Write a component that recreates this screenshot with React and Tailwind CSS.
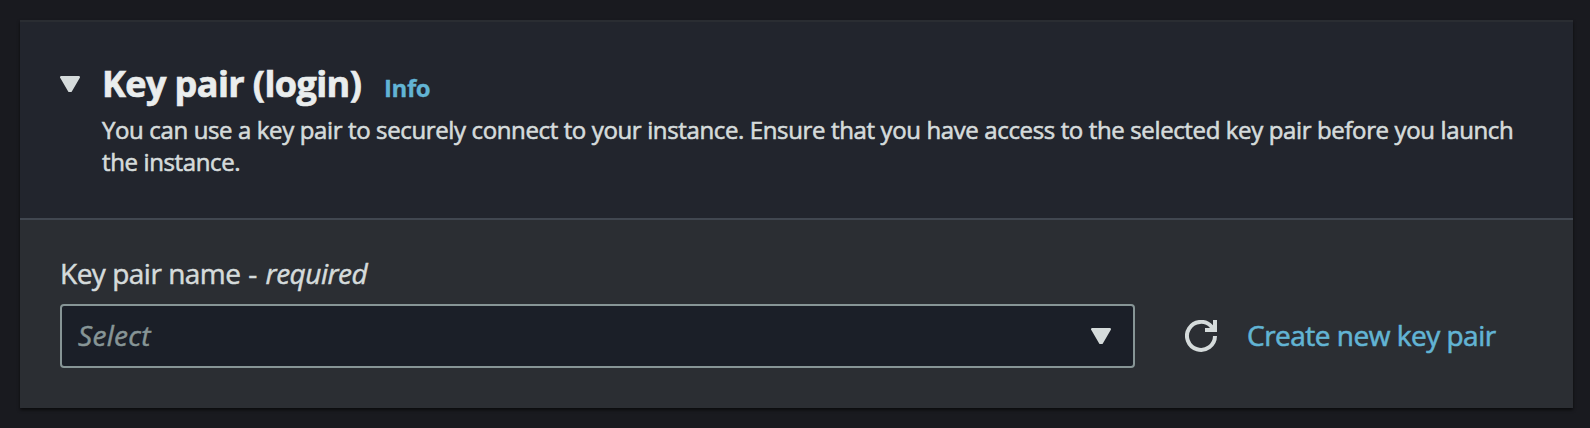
export default function App() {
  return (
    <div className="h-[428px] w-[1590px] bg-[#191a1f] pt-5 pl-5 font-['Open_Sans',sans-serif]">
      <section className="h-[388px] w-[1553px] border-t-2 border-[#2a2d32] bg-[#2b2e33] shadow-[0_2px_3px_rgba(0,0,0,0.6)]">
        <header className="flex h-[198px] border-b-2 border-[#414750] bg-[#22252d] pt-[36px] pl-10">
          <svg className="mt-[18px] h-4 w-5 shrink-0" viewBox="0 0 20 16"><path d="M1.2 1.2h17.6L10.8 14.8H9.2z" fill="#d5dbdb" stroke="#d5dbdb" strokeWidth="2.4" strokeLinejoin="round" /></svg>
          <div className="ml-[22px]">
            <div className="flex h-14 items-baseline">
              <h2 className="w-[282px] text-[36px] leading-[51px] font-bold tracking-[-0.6px] whitespace-nowrap text-[#eaeded] [-webkit-text-stroke:0.7px]">Key pair (login)</h2>
              <a className="text-[24px] font-bold tracking-[-0.4px] text-[#62b4d4] [-webkit-text-stroke:0.3px]">Info</a>
            </div>
            <p className="text-[24px] leading-8 tracking-[-0.37px] whitespace-nowrap text-[#d5dbdb] [-webkit-text-stroke:0.6px]">You can use a key pair to securely connect to your instance. Ensure that you have access to the selected key pair before you launch<br />the instance.</p>
          </div>
        </header>
        <div className="px-10 pt-[33px]">
          <label className="block text-[28px] leading-10 tracking-[-0.5px] text-[#d5dbdb] [-webkit-text-stroke:0.5px]">Key pair name <span className="ml-px">-</span> <i className="ml-[2px]">required</i></label>
          <div className="mt-[11px] flex items-center">
            <button className="flex h-16 w-[1075px] items-center justify-between rounded-[4px] border-2 border-[#879596] bg-[#1b1f28] pr-[22px] pl-4 text-[28px] tracking-[0.3px] text-[#879596] italic [-webkit-text-stroke:0.5px]"><span className="mb-[2px]">Select</span>
              <svg className="h-4 w-5" viewBox="0 0 20 16"><path d="M1.2 1.2h17.6L10.8 14.8H9.2z" fill="#d5dbdb" stroke="#d5dbdb" strokeWidth="2.4" strokeLinejoin="round" /></svg>
            </button>
            <svg className="ml-[50px] h-8 w-8" viewBox="0 0 32 32"><path d="M30 16A14 14 0 1 1 26.5 6.6L29 10M30 0v10H20" fill="none" stroke="#d5dbdb" strokeWidth="4" /></svg>
            <a className="mb-[2px] ml-[30px] text-[28px] tracking-[-0.5px] whitespace-nowrap text-[#62b4d4] [-webkit-text-stroke:0.6px]">Create new key pair</a>
          </div>
        </div>
      </section>
    </div>
  );
}
